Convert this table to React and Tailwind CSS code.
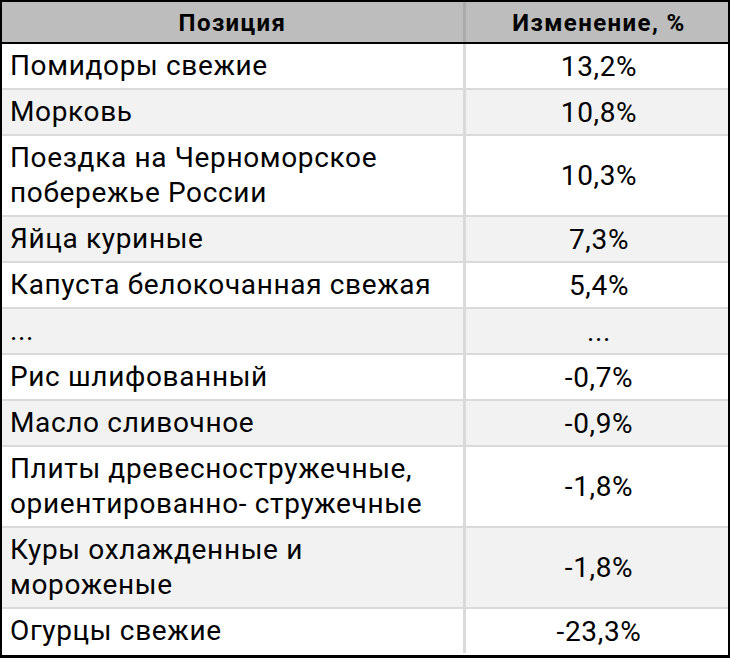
import React from 'react';

const rows = [
  { name: ['Помидоры свежие'], value: '13,2%' },
  { name: ['Морковь'], value: '10,8%' },
  { name: ['Поездка на Черноморское', 'побережье России'], value: '10,3%' },
  { name: ['Яйца куриные'], value: '7,3%' },
  { name: ['Капуста белокочанная свежая'], value: '5,4%' },
  { name: ['...'], value: '...' },
  { name: ['Рис шлифованный'], value: '-0,7%' },
  { name: ['Масло сливочное'], value: '-0,9%' },
  { name: ['Плиты древесностружечные,', 'ориентированно- стружечные'], value: '-1,8%' },
  { name: ['Куры охлажденные и', 'мороженые'], value: '-1,8%' },
  { name: ['Огурцы свежие'], value: '-23,3%' },
];

export default function App() {
  return (
    <div
      className="w-[730px] h-[658px] bg-white text-black overflow-hidden"
      style={{ fontFamily: 'Roboto, "Noto Sans", sans-serif' }}
    >
      <div className="border-2 border-black border-b-[3px] h-[658px] flex flex-col">
        {/* Header */}
        <div className="flex h-[42px] bg-[#bdbdbd] border-b-2 border-black font-bold text-[24px] tracking-[1.4px]">
          <div className="w-[464px] border-r-[3px] border-[#aaaaaa] flex items-center justify-center pt-[2px]">
            Позиция
          </div>
          <div className="flex-1 flex items-center justify-center pt-[2px] pl-[4px]">
            Изменение, %
          </div>
        </div>

        {/* Rows */}
        {rows.map((row, i) => (
          <div
            key={i}
            className={`flex text-[28px] leading-[35px] tracking-[0.65px] ${i % 2 === 1 ? 'bg-[#f2f2f2]' : 'bg-white'} ${i < rows.length - 1 ? 'border-b-2 border-[#dadada]' : ''}`}
          >
            <div className="w-[464px] border-r-[3px] border-[#dadada] pl-[8px] pt-[4px] pb-[5px]">
              {row.name.map((line, j) => (
                <div key={j}>{line}</div>
              ))}
            </div>
            <div className="flex-1 flex items-center justify-center pl-[4px]">
              {row.value}
            </div>
          </div>
        ))}
      </div>
    </div>
  );
}
